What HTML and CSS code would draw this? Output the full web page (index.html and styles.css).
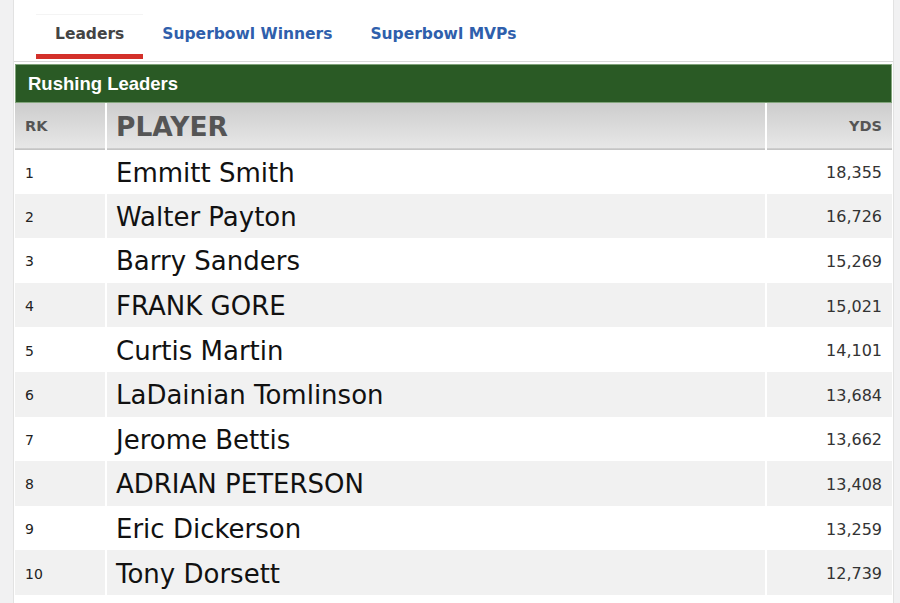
FILE: index.html
```html
<!DOCTYPE html>
<html>
<head>
<meta charset="utf-8">
<link rel="stylesheet" href="styles.css">
</head>
<body>
<div class="page">
  <nav class="tabs">
    <a class="tab active">Leaders</a>
    <a class="tab">Superbowl Winners</a>
    <a class="tab">Superbowl MVPs</a>
  </nav>
  <section class="panel">
    <div class="panel-title">Rushing Leaders</div>
    <table class="stats">
      <thead>
        <tr><th class="rk">RK</th><th class="player">PLAYER</th><th class="yds">YDS</th></tr>
      </thead>
      <tbody>
        <tr><td class="rk">1</td><td class="player">Emmitt Smith</td><td class="yds">18,355</td></tr>
        <tr><td class="rk">2</td><td class="player">Walter Payton</td><td class="yds">16,726</td></tr>
        <tr><td class="rk">3</td><td class="player">Barry Sanders</td><td class="yds">15,269</td></tr>
        <tr><td class="rk">4</td><td class="player">FRANK GORE</td><td class="yds">15,021</td></tr>
        <tr><td class="rk">5</td><td class="player">Curtis Martin</td><td class="yds">14,101</td></tr>
        <tr><td class="rk">6</td><td class="player">LaDainian Tomlinson</td><td class="yds">13,684</td></tr>
        <tr><td class="rk">7</td><td class="player">Jerome Bettis</td><td class="yds">13,662</td></tr>
        <tr><td class="rk">8</td><td class="player">ADRIAN PETERSON</td><td class="yds">13,408</td></tr>
        <tr><td class="rk">9</td><td class="player">Eric Dickerson</td><td class="yds">13,259</td></tr>
        <tr><td class="rk">10</td><td class="player">Tony Dorsett</td><td class="yds">12,739</td></tr>
        <tr class="empty"><td class="rk"></td><td class="player"></td><td class="yds"></td></tr>
      </tbody>
    </table>
  </section>
</div>
</body>
</html>
```

FILE: styles.css
```css
html, body {
  margin: 0;
  padding: 0;
  background: #f1f1f2;
  height: 100%;
  overflow: hidden;
}

.page {
  margin-left: 13px;
  width: 879px;
  min-height: 603px;
  background: #fff;
  border-left: 1px solid #e2e2e2;
  border-right: 1px solid #e2e2e2;
  font-family: "DejaVu Sans", Verdana, sans-serif;
}

.tabs {
  display: flex;
  padding: 14px 0 0 22px;
  height: 47px;
  box-sizing: border-box;
}

.tab {
  display: block;
  padding: 11px 19px 0;
  height: 30px;
  font-family: "DejaVu Sans", Verdana, sans-serif;
  font-weight: bold;
  font-size: 15.5px;
  color: #2f5fac;
  text-decoration: none;
}

.tab.active {
  color: #444;
  border-bottom: 5px solid #d3302a;
  border-top: 1px solid #f4f4f4;
  height: 29px;
  padding-top: 10px;
}

.panel {
  margin-top: 14px;
  border-top: 1px solid #d9d9d9;
  padding: 2px 1px 0 1px;
}

.panel-title {
  height: 37px;
  background: #2a5a25;
  border: 1px solid #82a47c;
  color: #fff;
  font-family: "Liberation Sans", Arial, sans-serif;
  font-weight: bold;
  font-size: 18.5px;
  line-height: 38px;
  padding-left: 12px;
}

.stats {
  width: 100%;
  border-collapse: collapse;
  table-layout: fixed;
}

.stats th,
.stats td {
  padding: 0;
  border-right: 2px solid #fff;
}

.stats th:last-child,
.stats td:last-child {
  border-right: none;
}

.stats thead tr {
  height: 46px;
  background: linear-gradient(#cdcdcd, #e7e7e7);
  border-bottom: 1px solid #c4c4c4;
}

.stats th {
  color: #555;
  font-weight: bold;
  text-align: left;
}

.stats th.rk {
  font-size: 14.5px;
  padding-left: 10px;
  width: 80px;
}

.stats th.player {
  font-size: 26.5px;
  padding-left: 9px;
  padding-top: 1px;
}

.stats th.yds {
  font-size: 14.5px;
  text-align: right;
  padding-right: 10px;
  width: 115px;
}

.stats tbody tr {
  height: 44.6px;
  background: #fff;
}

.stats tbody tr:nth-child(even) {
  background: #f1f1f1;
}

.stats td {
  padding-top: 2px;
}

.stats td.rk {
  font-size: 14px;
  color: #222;
  padding-left: 10px;
}

.stats td.player {
  font-size: 26px;
  color: #111;
  padding-left: 9px;
}

.stats td.yds {
  font-size: 16px;
  color: #333;
  text-align: right;
  padding-right: 10px;
}
```
